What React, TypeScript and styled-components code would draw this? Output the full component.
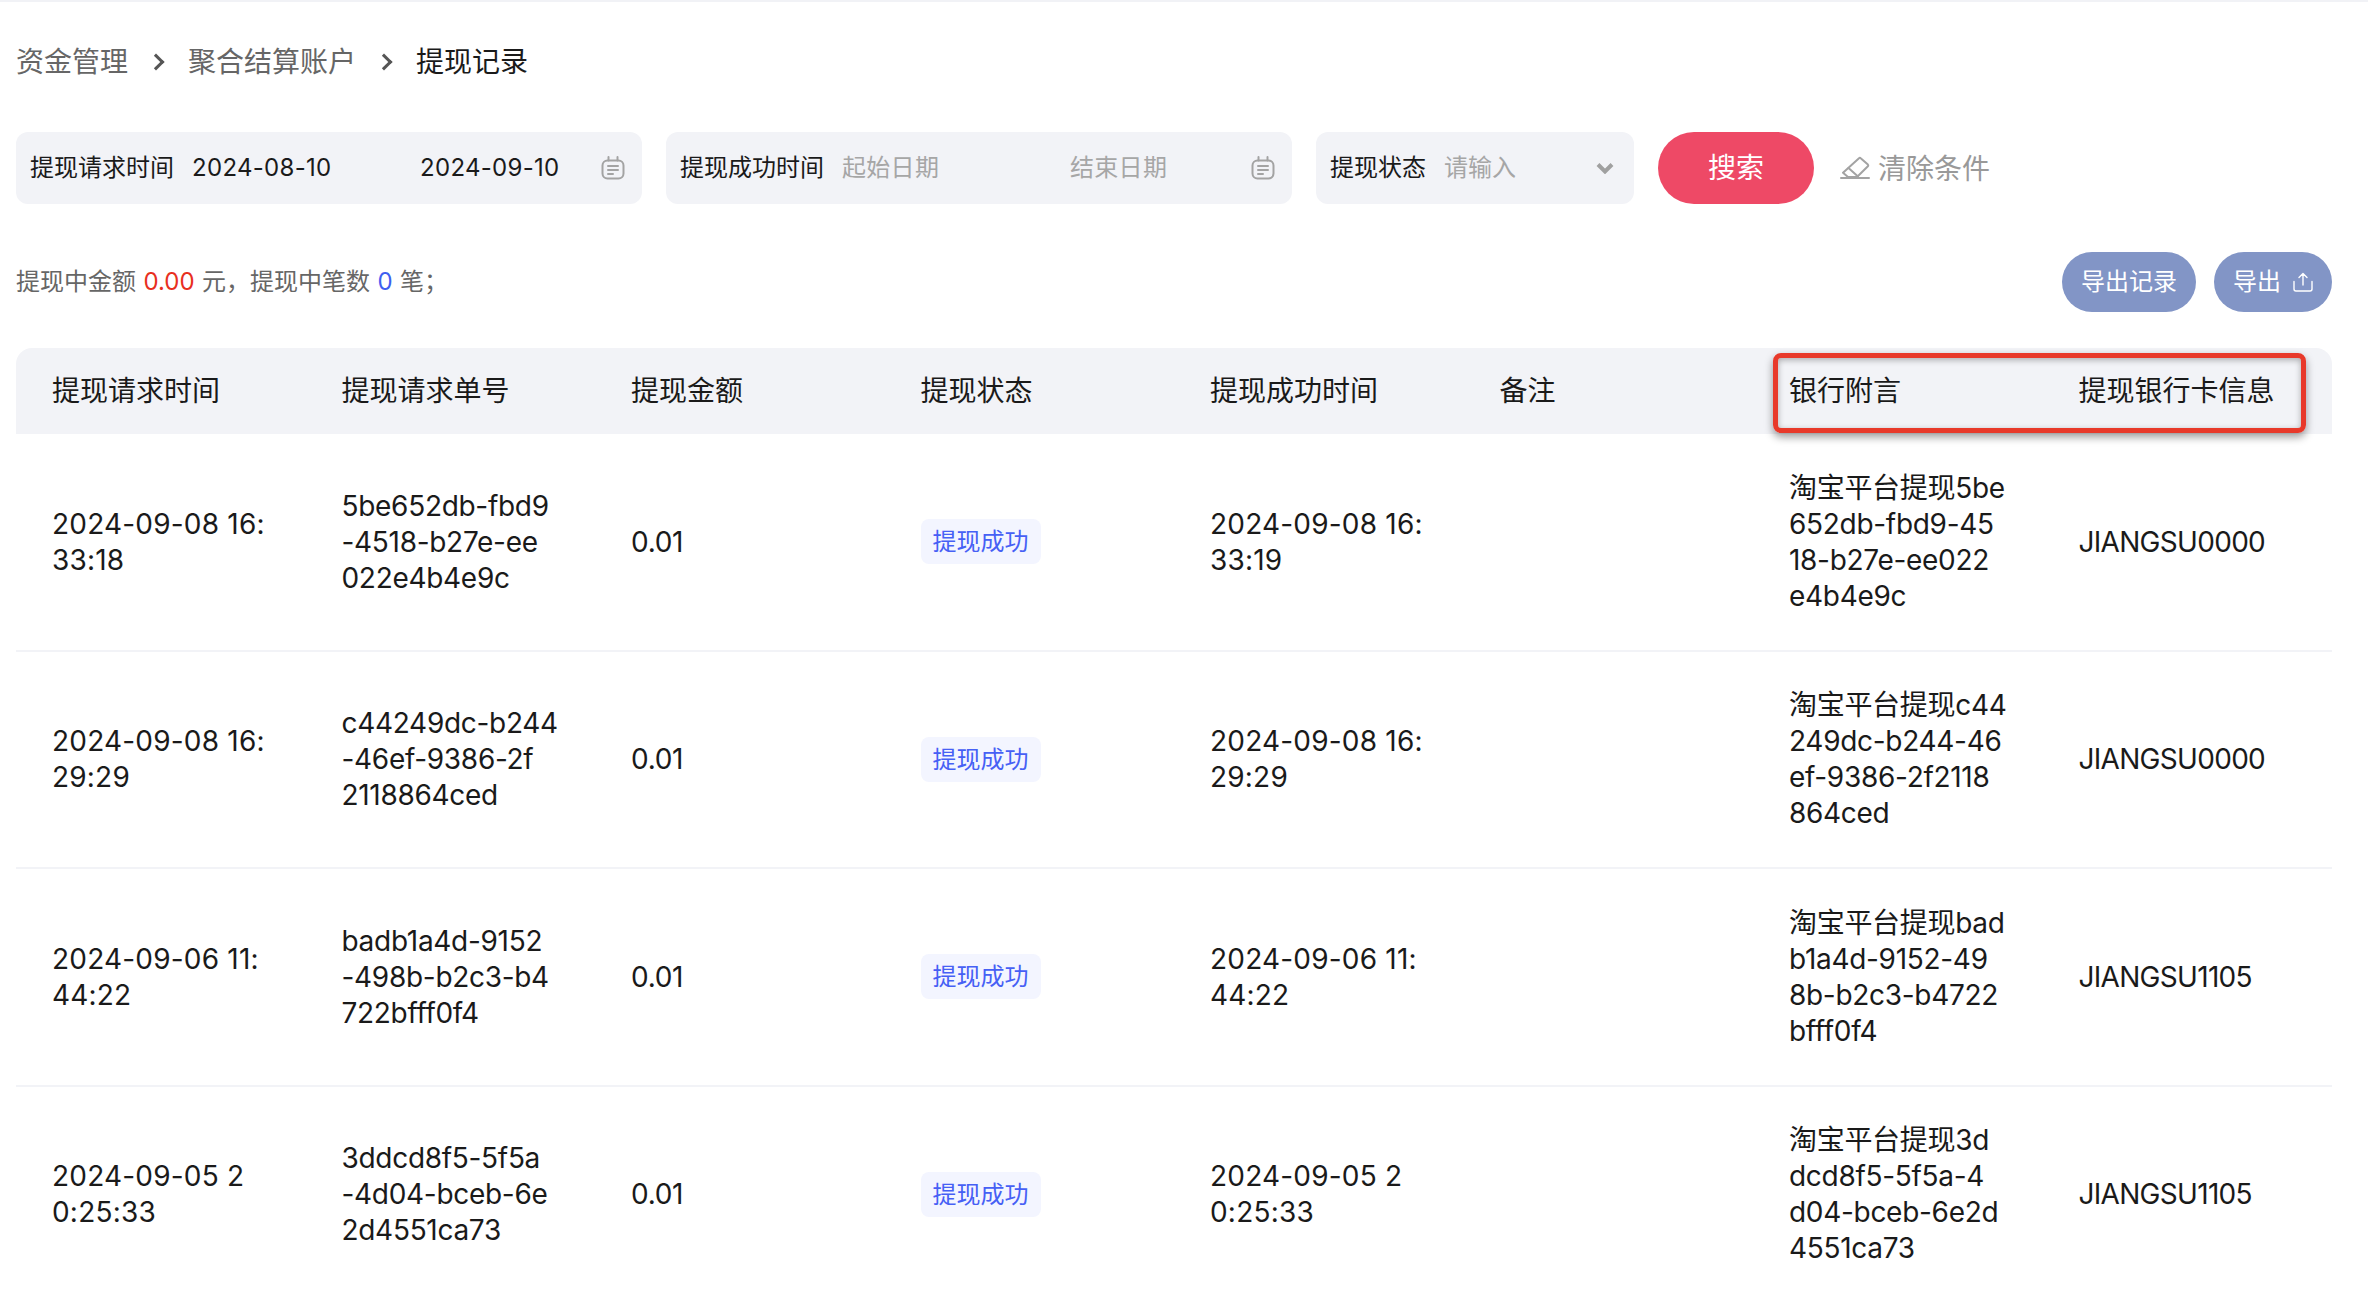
import { FunctionComponent } from 'react'
import styled, { createGlobalStyle } from 'styled-components'

const columns = ['提现请求时间', '提现请求单号', '提现金额', '提现状态', '提现成功时间', '备注', '银行附言', '提现银行卡信息']

const records = [
  {
    time: '2024-09-08 16:\n33:18',
    orderNo: '5be652db-fbd9\n-4518-b27e-ee\n022e4b4e9c',
    remark: '淘宝平台提现5be\n652db-fbd9-45\n18-b27e-ee022\ne4b4e9c',
    successTime: '2024-09-08 16:\n33:19',
    card: 'JIANGSU0000'
  },
  {
    time: '2024-09-08 16:\n29:29',
    orderNo: 'c44249dc-b244\n-46ef-9386-2f\n2118864ced',
    remark: '淘宝平台提现c44\n249dc-b244-46\nef-9386-2f2118\n864ced',
    successTime: '2024-09-08 16:\n29:29',
    card: 'JIANGSU0000'
  },
  {
    time: '2024-09-06 11:\n44:22',
    orderNo: 'badb1a4d-9152\n-498b-b2c3-b4\n722bfff0f4',
    remark: '淘宝平台提现bad\nb1a4d-9152-49\n8b-b2c3-b4722\nbfff0f4',
    successTime: '2024-09-06 11:\n44:22',
    card: 'JIANGSU1105'
  },
  {
    time: '2024-09-05 2\n0:25:33',
    orderNo: '3ddcd8f5-5f5a\n-4d04-bceb-6e\n2d4551ca73',
    remark: '淘宝平台提现3d\ndcd8f5-5f5a-4\nd04-bceb-6e2d\n4551ca73',
    successTime: '2024-09-05 2\n0:25:33',
    card: 'JIANGSU1105'
  }
]

const CalendarIcon = () => (
  <FieldIcon width='24' height='24' viewBox='0 0 24 24' fill='none' stroke='#a3a3a3' strokeWidth='2' strokeLinecap='round'>
    <rect x='1.5' y='4.5' width='21' height='18' rx='5' />
    <path d='M7.5 1v3.5M16.5 1v3.5M7 10h10M7 14h10M7 18h5' />
  </FieldIcon>
)

const Chevron = () => (
  <svg width='18' height='12' viewBox='0 0 18 12' fill='none' stroke='#a0a0a0' strokeWidth='4'>
    <path d='M2 2.5l7 7 7-7' />
  </svg>
)

const EraserIcon = () => (
  <svg width='30' height='24' viewBox='0 0 30 24' fill='none' stroke='#a3a3a3' strokeWidth='2' strokeLinejoin='round' strokeLinecap='round'>
    <path d='M3 16.7L19 2.2a1.2 1.2 0 0 1 1.7 0l7.2 6.4a1.2 1.2 0 0 1 0 1.7L17 21H8z' />
    <path d='M8.5 12L18 20.5M1 22h28' />
  </svg>
)

const UploadIcon = () => (
  <svg width='20' height='20' viewBox='0 0 20 20' fill='none' stroke='#fff' strokeWidth='1.4' strokeLinecap='round' strokeLinejoin='round'>
    <path d='M10 13V1.5M6 5.5l4-4 4 4M1 9.5V17a2 2 0 0 0 2 2h14a2 2 0 0 0 2-2V9.5' />
  </svg>
)

const App: FunctionComponent = () => {
  return (
    <Page>
      <GlobalStyle />
      <Breadcrumb>
        <Crumb>资金管理</Crumb>
        <CrumbSep />
        <Crumb>聚合结算账户</Crumb>
        <CrumbSep />
        <Crumb current>提现记录</Crumb>
      </Breadcrumb>

      <Filters>
        <DateField>
          <FieldLabel>提现请求时间</FieldLabel>
          <DateStart>2024-08-10</DateStart>
          <DateEnd>2024-09-10</DateEnd>
          <CalendarIcon />
        </DateField>
        <DateField>
          <FieldLabel>提现成功时间</FieldLabel>
          <DateStart placeholder>起始日期</DateStart>
          <DateEnd placeholder>结束日期</DateEnd>
          <CalendarIcon />
        </DateField>
        <SelectField>
          <StatusLabel>提现状态</StatusLabel>
          <SelectValue>请输入</SelectValue>
          <Chevron />
        </SelectField>
        <SearchButton>搜索</SearchButton>
        <ClearButton>
          <EraserIcon />
          <ClearText>清除条件</ClearText>
        </ClearButton>
      </Filters>

      <SummaryRow>
        <Summary>
          提现中金额 <Amount>0.00</Amount> 元，提现中笔数 <Count>0</Count> 笔；
        </Summary>
        <Actions>
          <ExportButton>导出记录</ExportButton>
          <ExportButton>
            导出
            <UploadIcon />
          </ExportButton>
        </Actions>
      </SummaryRow>

      <Table>
        <HeaderRow>
          {columns.map((title) => (
            <HeaderCell key={title}>{title}</HeaderCell>
          ))}
          <Highlight />
        </HeaderRow>
        {records.map((record) => (
          <Row key={record.orderNo}>
            <TimeCell>{record.time}</TimeCell>
            <Cell>{record.orderNo}</Cell>
            <Cell>0.01</Cell>
            <Cell>
              <StatusTag>提现成功</StatusTag>
            </Cell>
            <TimeCell>{record.successTime}</TimeCell>
            <Cell />
            <Cell>{record.remark}</Cell>
            <CardCell>{record.card}</CardCell>
          </Row>
        ))}
      </Table>
    </Page>
  )
}
export default App

const GlobalStyle = createGlobalStyle`
  html, body {
    margin: 0;
    height: 1290px;
    overflow: hidden;
    background: #fff;
  }
`

const Page = styled.div`
  box-sizing: border-box;
  width: 2368px;
  height: 1290px;
  overflow: hidden;
  padding: 0 36px 0 16px;
  border-top: 2px solid #f1f2f6;
  font-family: Inter, 'Noto Sans CJK SC', sans-serif;
  line-height: 36px;
  color: #1a1a1a;
`

const Breadcrumb = styled.div`
  display: flex;
  align-items: center;
  gap: 26px;
  height: 40px;
  margin-top: 40px;
  font-size: 28px;
`

const Crumb = styled.span<{ current?: boolean }>`
  color: ${(props) => (props.current ? '#1a1a1a' : '#666')};
`

const CrumbSep = styled.i`
  width: 9px;
  height: 9px;
  margin-left: -4px;
  border-top: 3px solid #555;
  border-right: 3px solid #555;
  transform: rotate(45deg);
`

const Filters = styled.div`
  display: flex;
  align-items: center;
  gap: 24px;
  margin-top: 50px;
  height: 72px;
  font-size: 24px;
`

const FieldBox = styled.div`
  box-sizing: border-box;
  display: flex;
  align-items: center;
  height: 72px;
  padding: 0 14px;
  background: #f2f3f7;
  border-radius: 12px;
`

const DateField = styled(FieldBox)`
  width: 626px;
`

const SelectField = styled(FieldBox)`
  width: 318px;
  padding-right: 20px;
`

const FieldLabel = styled.span`
  width: 144px;
  flex-shrink: 0;
  white-space: nowrap;
`

const StatusLabel = styled(FieldLabel)`
  width: 96px;
`

const DateStart = styled.span<{ placeholder?: boolean }>`
  width: 228px;
  margin-left: 18px;
  letter-spacing: 0.3px;
  color: ${(props) => (props.placeholder ? '#a6a6a6' : '#1a1a1a')};
`

const DateEnd = styled.span<{ placeholder?: boolean }>`
  width: 181px;
  letter-spacing: 0.3px;
  color: ${(props) => (props.placeholder ? '#a6a6a6' : '#1a1a1a')};
`

const FieldIcon = styled.svg`
  flex-shrink: 0;
`

const SelectValue = styled.span`
  flex: 1;
  margin-left: 18px;
  color: #a6a6a6;
`

const SearchButton = styled.button`
  width: 156px;
  height: 72px;
  border: 0;
  border-radius: 36px;
  background: #ee4966;
  color: #fff;
  font: inherit;
  font-size: 28px;
`

const ClearButton = styled.button`
  display: flex;
  align-items: center;
  gap: 8px;
  margin-left: 2px;
  padding: 0;
  border: 0;
  background: none;
  color: #999;
  font: inherit;
  font-size: 28px;
`

const ClearText = styled.span`
  padding-top: 2px;
`

const SummaryRow = styled.div`
  display: flex;
  align-items: center;
  justify-content: space-between;
  height: 60px;
  margin-top: 48px;
`

const Summary = styled.div`
  font-size: 24px;
  word-spacing: 0.7px;
  color: #666;
`

const Amount = styled.span`
  color: #e8301e;
`

const Count = styled.span`
  color: #3f5ff0;
`

const Actions = styled.div`
  display: flex;
  gap: 18px;
`

const ExportButton = styled.button`
  display: flex;
  align-items: center;
  gap: 12px;
  height: 60px;
  padding: 0 19px;
  border: 0;
  border-radius: 30px;
  background: #8295c6;
  color: #fff;
  font: inherit;
  font-size: 24px;
`

const Table = styled.div`
  margin-top: 36px;
`

const HeaderRow = styled.div`
  position: relative;
  display: grid;
  grid-template-columns: repeat(8, 1fr);
  align-items: center;
  height: 86px;
  background: #f2f3f7;
  border-radius: 16px 16px 0 0;
`

const HeaderCell = styled.div`
  padding-left: 36px;
  font-size: 28px;
  white-space: nowrap;
`

const Highlight = styled.div`
  position: absolute;
  left: 1757px;
  top: 5px;
  box-sizing: border-box;
  width: 533px;
  height: 80px;
  border: 5px solid #e8392a;
  border-radius: 8px;
  box-shadow: 0 4px 8px rgba(0, 0, 0, 0.4), inset 0 2px 6px rgba(0, 0, 0, 0.3);
`

const Row = styled.div`
  box-sizing: border-box;
  display: grid;
  grid-template-columns: repeat(8, 1fr);
  align-items: center;
  height: 217.5px;
  border-bottom: 2px solid #f2f3f7;
`

const Cell = styled.div`
  padding-left: 36px;
  font-size: 28px;
  white-space: pre-line;
  letter-spacing: -0.3px;
`

const TimeCell = styled(Cell)`
  letter-spacing: 0.2px;
`

const CardCell = styled(Cell)`
  letter-spacing: -0.7px;
`

const StatusTag = styled.span`
  display: inline-block;
  height: 45px;
  padding: 0 12px;
  border-radius: 8px;
  background: #f3f5ff;
  color: #4660f5;
  font-size: 24px;
  line-height: 45px;
  letter-spacing: 0;
`
